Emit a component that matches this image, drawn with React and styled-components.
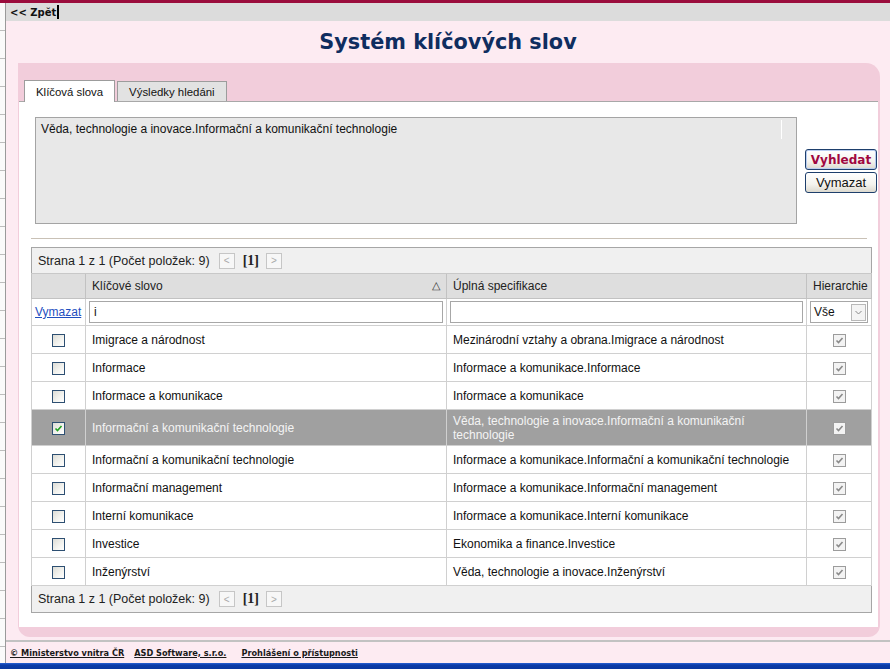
import React from "react";
import styled, { createGlobalStyle } from "styled-components";

const GlobalStyle = createGlobalStyle`
  html, body { margin: 0; padding: 0; }
  body {
    background: #fdebf2;
    font-family: "Liberation Sans", Arial, sans-serif;
    font-size: 12px;
    color: #111;
  }
`;

const Page = styled.div`
  width: 890px;
  height: 669px;
  display: flex;
  flex-direction: column;
  overflow: hidden;
  background: #fdebf2;
`;

const TopStripe = styled.div`
  height: 3px;
  background: #9b0d3d;
`;

const Body = styled.div`
  flex: 1;
  display: flex;
  min-height: 0;
`;

const Gutter = styled.div`
  width: 5px;
  background: repeating-linear-gradient(to bottom, #fafafa 0 27px, #bdbdbd 27px 28px);
  border-right: 1px solid #9a9a9a;
`;

const Main = styled.div`
  flex: 1;
  display: flex;
  flex-direction: column;
`;

const Toolbar = styled.div`
  height: 18px;
  background: #dcdcdc;
  display: flex;
  align-items: center;
  padding-left: 4px;
`;

const BackLink = styled.span`
  font-family: "DejaVu Sans", Verdana, sans-serif;
  font-weight: bold;
  font-size: 10px;
  color: #111;
`;

const Caret = styled.span`
  display: inline-block;
  width: 2px;
  height: 14px;
  background: #000;
  margin-left: 1px;
`;

const Title = styled.h1`
  margin: 0;
  height: 42px;
  display: flex;
  align-items: center;
  justify-content: center;
  font-family: "DejaVu Sans", Verdana, sans-serif;
  font-weight: bold;
  font-size: 20.8px;
  color: #0f2d5f;
`;

const Panel = styled.div`
  margin: 0 10px 0 12px;
  height: 574px;
  background: #f2cddb;
  border-radius: 0 14px 12px 12px;
  display: flex;
  flex-direction: column;
  padding: 0 2px 10px 1px;
  box-sizing: border-box;
`;

const TabStrip = styled.div`
  height: 38px;
  display: flex;
  align-items: flex-end;
  gap: 2px;
  padding-left: 5px;
  box-sizing: border-box;
`;

const Tab = styled.div`
  height: ${(p) => (p.$active ? "22px" : "20px")};
  padding: 0 ${(p) => (p.$active ? "11px" : "11px")};
  display: flex;
  align-items: center;
  background: ${(p) => (p.$active ? "#ffffff" : "#e2e2e2")};
  border: 1px solid #9c9c9c;
  border-bottom: none;
  box-sizing: border-box;
  margin-bottom: ${(p) => (p.$active ? "-1px" : "0")};
  position: relative;
  z-index: ${(p) => (p.$active ? 1 : 0)};
  font-size: 11.4px;
  color: #111;
`;

const Content = styled.div`
  flex: 1;
  background: #fff;
  border-top: 1px solid #a8a8a8;
  padding: 15px 0 0 16px;
  box-sizing: border-box;
  display: flex;
  flex-direction: column;
`;

const SearchRow = styled.div`
  display: flex;
  align-items: flex-start;
`;

const SelectedBox = styled.div`
  width: 762px;
  height: 107px;
  background: #e8e8e8;
  border: 1px solid #a4a4a4;
  box-sizing: border-box;
  padding: 4px 5px;
  font-size: 12px;
  position: relative;
  &::after {
    content: "";
    position: absolute;
    left: 745px;
    top: 2px;
    width: 1px;
    height: 19px;
    background: #fff;
  }
`;

const ButtonCol = styled.div`
  display: flex;
  flex-direction: column;
  gap: 2px;
  margin-left: 8px;
  padding-top: 32px;
`;

const Button = styled.button`
  width: 72px;
  height: 21px;
  padding: 0;
  border: 1px solid #1e3f6c;
  border-radius: 3px;
  background: linear-gradient(to bottom, #ffffff 0%, #f4f3ee 60%, #dcd9cf 100%);
  font-family: ${(p) => (p.$primary ? '"DejaVu Sans", Verdana, sans-serif' : '"Liberation Sans", Arial, sans-serif')};
  font-weight: ${(p) => (p.$primary ? "bold" : "normal")};
  font-size: ${(p) => (p.$primary ? "12px" : "13px")};
  color: ${(p) => (p.$primary ? "#a0063f" : "#111")};
  box-shadow: ${(p) => (p.$primary ? "inset 0 0 0 1px #b9cdf0" : "none")};
`;

const Rule = styled.div`
  width: 836px;
  height: 1px;
  background: #c9c1b6;
  margin: 14px 0 0 -4px;
`;

const Grid = styled.table`
  width: 840px;
  margin: 8px 0 0 -4px;
  border-collapse: collapse;
  border: 1px solid #a6a6a6;
  table-layout: fixed;
  font-size: 12px;
`;

const PagerCell = styled.td`
  height: ${(p) => (p.$bottom ? "27px" : "26px")};
  box-sizing: border-box;
  background: #f0f0f0;
  padding: 0 0 0 6px;
  border-${(p) => (p.$bottom ? "top" : "bottom")}: 1px solid #c8c8c8;
`;

const Pager = styled.div`
  display: flex;
  align-items: center;
  color: #222;
  font-size: 12.5px;
`;

const PageArrow = styled.span`
  display: inline-flex;
  align-items: center;
  justify-content: center;
  width: 14px;
  height: 14px;
  border: 1px solid #c6c6c6;
  color: #aaa;
  font-size: 10px;
  margin-left: ${(p) => p.$ml || 0}px;
  background: #f7f7f7;
`;

const PageCurrent = styled.span`
  font-family: "Liberation Serif", "Times New Roman", serif;
  font-weight: bold;
  font-size: 14px;
  margin-left: 8px;
  color: #222;
`;

const HeadCell = styled.th`
  height: 25px;
  box-sizing: border-box;
  background: #dedede;
  font-weight: normal;
  text-align: left;
  padding: 0 6px;
  border: 1px solid #c2c2c2;
  border-top: none;
  color: #222;
  position: relative;
`;

const SortMark = styled.span`
  position: absolute;
  right: 6px;
  top: 5px;
  font-size: 11px;
  color: #333;
`;

const FilterCell = styled.td`
  height: 27px;
  box-sizing: border-box;
  padding: 0 3px;
  border: 1px solid #d0d0d0;
  background: #fff;
`;

const ClearLink = styled.a`
  color: #1f4fbf;
  text-decoration: underline;
  font-size: 12px;
`;

const FilterInput = styled.div`
  height: 22px;
  border: 1px solid #a7a7a7;
  box-sizing: border-box;
  padding: 0 4px;
  display: flex;
  align-items: center;
  font-size: 12px;
`;

const SelectBox = styled.div`
  height: 22px;
  border: 1px solid #a7a7a7;
  box-sizing: border-box;
  display: flex;
  align-items: center;
  justify-content: space-between;
  padding: 0 1px 0 3px;
  font-size: 12px;
`;

const SelectArrow = styled.span`
  width: 15px;
  height: 17px;
  border: 1px solid #b8b8b8;
  box-sizing: border-box;
  display: flex;
  align-items: center;
  justify-content: center;
  background: #f4f4f4;
`;

const Row = styled.tr`
  background: ${(p) => (p.$selected ? "#a0a0a0" : "#fff")};
  color: ${(p) => (p.$selected ? "#f4f4f4" : "#111")};
`;

const Cell = styled.td`
  height: ${(p) => (p.$tall ? "36px" : "28px")};
  padding: 0 6px;
  border: 1px solid #d0d0d0;
  text-align: ${(p) => (p.$center ? "center" : "left")};
  vertical-align: middle;
  line-height: 14px;
  box-sizing: border-box;
`;

const Check = styled.span`
  display: inline-flex;
  align-items: center;
  justify-content: center;
  width: 13px;
  height: 13px;
  box-sizing: border-box;
  vertical-align: middle;
  border: 1px solid ${(p) => (p.$disabled ? "#9c9c9c" : "#2d4f72")};
  background: ${(p) =>
    p.$disabled ? "#f3f3f3" : "linear-gradient(135deg, #dcdcd6 0%, #f4f4f0 60%, #ffffff 100%)"};
`;

const FooterLine = styled.div`
  height: 2px;
  background: #c2c2c2;
  margin-top: 3px;
`;

const Footer = styled.div`
  height: 21px;
  display: flex;
  align-items: center;
  padding-left: 4px;
  gap: 10px;
`;

const FooterLink = styled.a`
  font-family: "DejaVu Sans", Verdana, sans-serif;
  font-weight: bold;
  font-size: 8.2px;
  color: #1a1a1a;
  text-decoration: underline;
  margin-right: ${(p) => p.$mr || 0}px;
`;

const Taskbar = styled.div`
  height: 6px;
  background: linear-gradient(to bottom, #2a62d6 0, #0b3ca8 2px, #0a38a0 100%);
`;

const CheckMark = ({ color }) => (
  <svg width="9" height="9" viewBox="0 0 9 9">
    <path d="M1.5 4.5 L3.5 6.5 L7.5 2" fill="none" stroke={color} strokeWidth="1.6" />
  </svg>
);

const rows = [
  ["Imigrace a národnost", "Mezinárodní vztahy a obrana.Imigrace a národnost"],
  ["Informace", "Informace a komunikace.Informace"],
  ["Informace a komunikace", "Informace a komunikace"],
  ["Informační a komunikační technologie", "Věda, technologie a inovace.Informační a komunikační technologie", true],
  ["Informační a komunikační technologie", "Informace a komunikace.Informační a komunikační technologie"],
  ["Informační management", "Informace a komunikace.Informační management"],
  ["Interní komunikace", "Informace a komunikace.Interní komunikace"],
  ["Investice", "Ekonomika a finance.Investice"],
  ["Inženýrství", "Věda, technologie a inovace.Inženýrství"],
];

const PagerRow = ({ bottom }) => (
  <tr>
    <PagerCell colSpan={4} $bottom={bottom}>
      <Pager>
        Strana 1 z 1 (Počet položek: 9)
        <PageArrow $ml={9}>&lt;</PageArrow>
        <PageCurrent>[1]</PageCurrent>
        <PageArrow $ml={7}>&gt;</PageArrow>
      </Pager>
    </PagerCell>
  </tr>
);

export default function App() {
  return (
    <Page>
      <GlobalStyle />
      <TopStripe />
      <Body>
        <Gutter />
        <Main>
          <Toolbar>
            <BackLink>&lt;&lt; Zpět</BackLink>
            <Caret />
          </Toolbar>
          <Title>Systém klíčových slov</Title>
          <Panel>
            <TabStrip>
              <Tab $active>Klíčová slova</Tab>
              <Tab>Výsledky hledáni</Tab>
            </TabStrip>
            <Content>
              <SearchRow>
                <SelectedBox>Věda, technologie a inovace.Informační a komunikační technologie</SelectedBox>
                <ButtonCol>
                  <Button $primary>Vyhledat</Button>
                  <Button>Vymazat</Button>
                </ButtonCol>
              </SearchRow>
              <Rule />
              <Grid>
                <colgroup>
                  <col style={{ width: 54 }} />
                  <col style={{ width: 361 }} />
                  <col style={{ width: 360 }} />
                  <col style={{ width: 65 }} />
                </colgroup>
                <tbody>
                  <PagerRow />
                  <tr>
                    <HeadCell />
                    <HeadCell>
                      Klíčové slovo
                      <SortMark>△</SortMark>
                    </HeadCell>
                    <HeadCell>Úplná specifikace</HeadCell>
                    <HeadCell>Hierarchie</HeadCell>
                  </tr>
                  <tr>
                    <FilterCell>
                      <ClearLink>Vymazat</ClearLink>
                    </FilterCell>
                    <FilterCell>
                      <FilterInput>i</FilterInput>
                    </FilterCell>
                    <FilterCell>
                      <FilterInput />
                    </FilterCell>
                    <FilterCell>
                      <SelectBox>
                        Vše
                        <SelectArrow>
                          <svg width="7" height="5" viewBox="0 0 7 5">
                            <path d="M0.5 1 L3.5 4 L6.5 1" fill="none" stroke="#888" strokeWidth="1" />
                          </svg>
                        </SelectArrow>
                      </SelectBox>
                    </FilterCell>
                  </tr>
                  {rows.map(([kw, spec, sel], i) => (
                    <Row key={i} $selected={sel}>
                      <Cell $center $tall={sel}>
                        <Check>{sel && <CheckMark color="#21a121" />}</Check>
                      </Cell>
                      <Cell $tall={sel}>{kw}</Cell>
                      <Cell $tall={sel}>{spec}</Cell>
                      <Cell $center $tall={sel}>
                        <Check $disabled>
                          <CheckMark color="#8a8a8a" />
                        </Check>
                      </Cell>
                    </Row>
                  ))}
                  <PagerRow bottom />
                </tbody>
              </Grid>
            </Content>
          </Panel>
          <FooterLine />
          <Footer>
            <FooterLink>© Ministerstvo vnitra ČR</FooterLink>
            <FooterLink $mr={5}>ASD Software, s.r.o.</FooterLink>
            <FooterLink>Prohlášení o přístupnosti</FooterLink>
          </Footer>
        </Main>
      </Body>
      <Taskbar />
    </Page>
  );
}
